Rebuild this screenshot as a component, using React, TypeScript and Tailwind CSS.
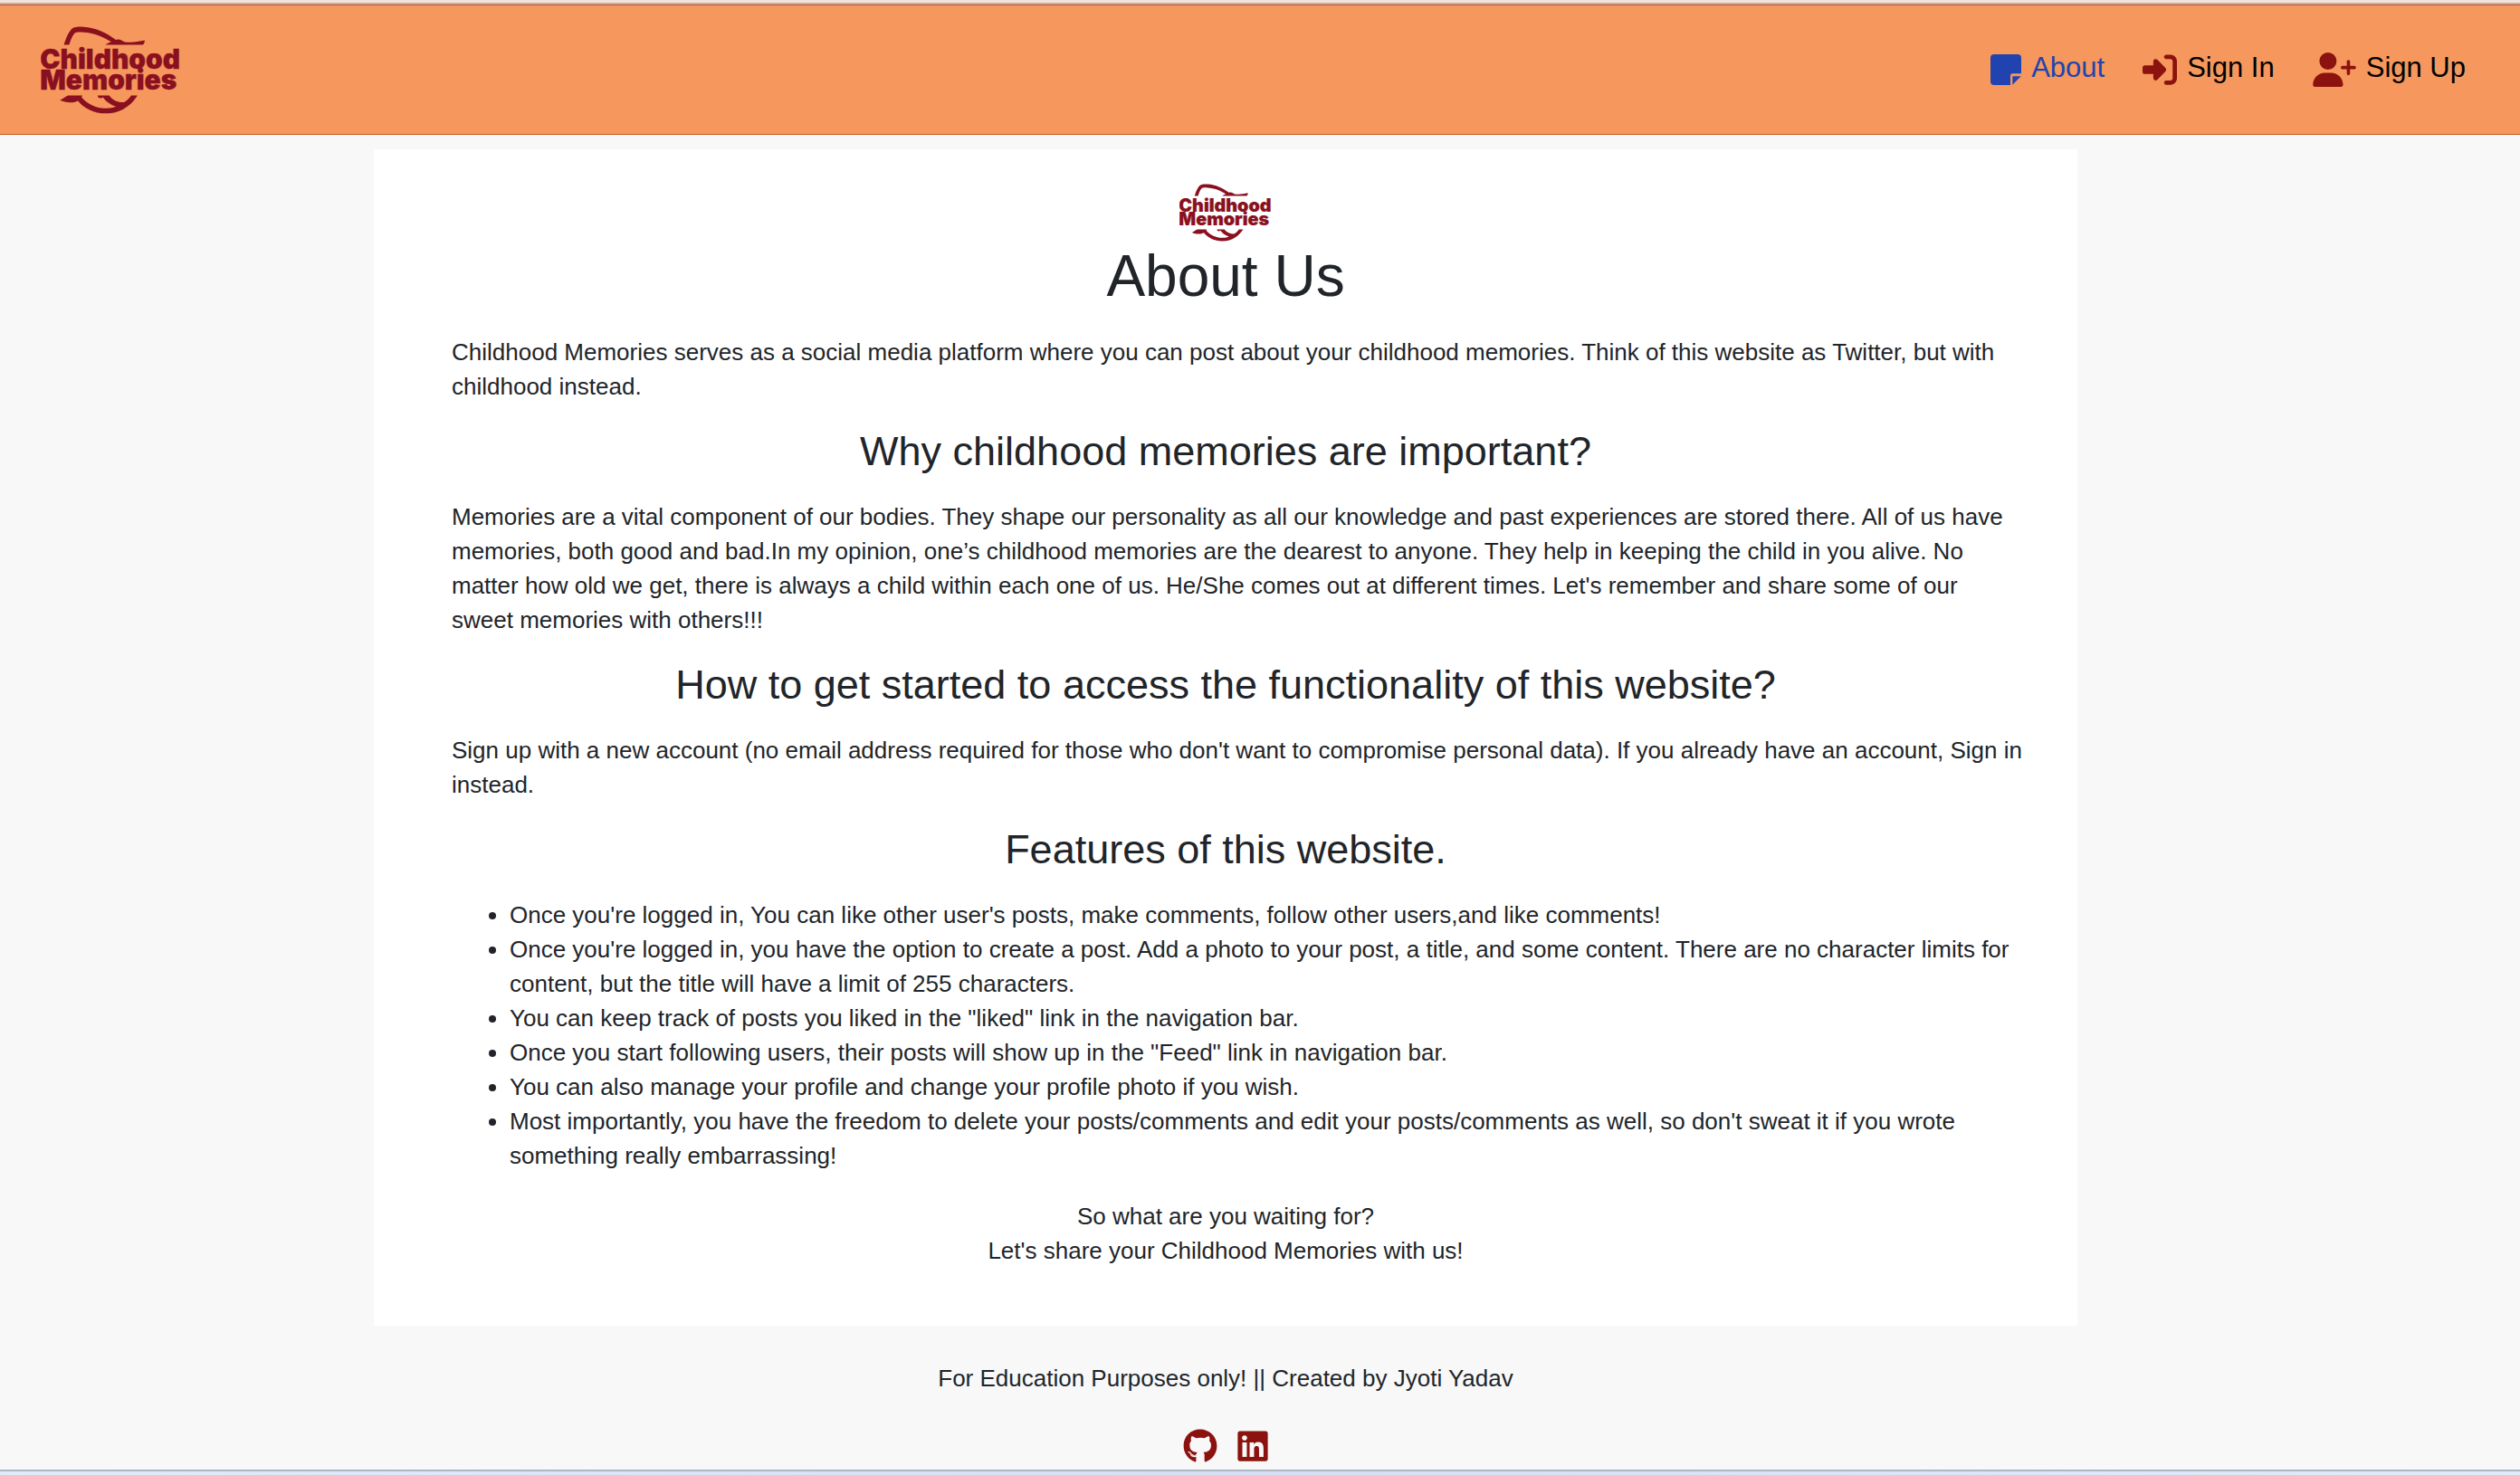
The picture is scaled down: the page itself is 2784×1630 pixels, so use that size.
import React from "react";
import { FaGithub, FaLinkedin } from "react-icons/fa";
import { FaRightToBracket, FaUserPlus } from "react-icons/fa6";

function Logo({ className }: { className: string }) {
  return (
    <svg viewBox="135 85 465 292" className={className} role="img" aria-label="Childhood Memories">
      <g fill="#8a1020">
        <path d="M211 147 C217 128 224 110 234 98 C240 88 256 86 276 87 C318 89 352 106 384 130 C394 126 402 130 410 136 C430 142 456 137 480 132 C480 139 478 144 474 147 L349 147 C356 142 362 138 369 137 C340 119 310 106 276 105 C262 104 252 104 246 109 C238 119 233 132 229 147 Z" />
        <path d="M198 331 C208 326 216 318 226 315 L273 315 L270 321 C290 344 320 358 350 358 C364 358 376 356 385 352 C366 346 350 334 341 321 C336 325 330 325 325 321 L324 315 L362 315 C372 330 388 338 411 338 C421 332 429 324 435 315 L456 315 C438 344 404 375 350 375 C312 375 278 358 258 333 C240 342 216 339 198 331 Z" />
        <text
          fontFamily="Inter, 'Liberation Sans', sans-serif"
          fontWeight={900}
          fontSize="90"
          stroke="#8a1020"
          strokeWidth={1}
          strokeLinejoin="round"
        >
          <tspan x="132" y="228">Childhood</tspan>
          <tspan x="132" y="297">Memories</tspan>
        </text>
      </g>
    </svg>
  );
}

function NoteIcon({ className }: { className: string }) {
  return (
    <svg viewBox="0 0 102 102" fill="currentColor" className={className} aria-hidden="true">
      <path d="M12 0H90A12 12 0 0 1 102 12V64H73A7 7 0 0 0 66 71V102H12A12 12 0 0 1 0 90V12A12 12 0 0 1 12 0Z" />
      <path d="M73 73H101L73 101Z" />
    </svg>
  );
}

const navLinks = [
  { label: "About", Icon: NoteIcon, icon: "h-[34px] w-[34px]", color: "text-[#2143b0]", iconColor: "text-[#2143b0]" },
  { label: "Sign In", Icon: FaRightToBracket, icon: "h-[38px] w-[38px]", color: "text-black", iconColor: "text-[#8b120e]" },
  { label: "Sign Up", Icon: FaUserPlus, icon: "h-[38px] w-12", color: "text-black", iconColor: "text-[#8b120e]" },
];

const features = [
  "Once you're logged in, You can like other user's posts, make comments, follow other users,and like comments!",
  "Once you're logged in, you have the option to create a post. Add a photo to your post, a title, and some content. There are no character limits for content, but the title will have a limit of 255 characters.",
  'You can keep track of posts you liked in the "liked" link in the navigation bar.',
  'Once you start following users, their posts will show up in the "Feed" link in navigation bar.',
  "You can also manage your profile and change your profile photo if you wish.",
  "Most importantly, you have the freedom to delete your posts/comments and edit your posts/comments as well, so don't sweat it if you wrote something really embarrassing!",
];

function Heading({ children }: { children: React.ReactNode }) {
  return <h2 className="text-center text-[45px] leading-[54px]">{children}</h2>;
}

function Paragraph({ children }: { children: React.ReactNode }) {
  return <p className="-mr-[26px]">{children}</p>;
}

export default function App() {
  return (
    <div className="flex min-h-screen flex-col bg-[#f8f8f8] font-['Liberation_Sans',Arial,sans-serif] text-[26px] leading-[38px] text-[#212529]">
      <div className="h-[5px] border-b-2 border-[#bfb0a9] bg-[#f6e0da]" />
      <header className="flex h-36 items-center justify-between border-y border-[#c4571c] bg-[#f6975d] pr-[60px] pl-[45px]">
        <a href="#home">
          <Logo className="h-[97px] w-[155px]" />
        </a>
        <nav className="flex items-center gap-[42px]">
          {navLinks.map(({ label, Icon, icon, color, iconColor }) => (
            <a key={label} href="#nav" className={`flex items-center gap-[11px] text-[31px] ${color}`}>
              <Icon className={`${icon} ${iconColor}`} />
              <span className="pb-1">{label}</span>
            </a>
          ))}
        </nav>
      </header>

      <div className="flex flex-col items-center pt-4 pr-[76px]">
        <main className="flex w-full max-w-[1882px] flex-col gap-[26px] bg-white px-[86px] pt-[38px] pb-16">
          <div className="flex flex-col items-center">
            <Logo className="h-[64px] w-[102px]" />
            <h1 className="text-[64px] leading-[77px]">About Us</h1>
          </div>
          <Paragraph>
            Childhood Memories serves as a social media platform where you can post about your childhood
            memories. Think of this website as Twitter, but with childhood instead.
          </Paragraph>
          <Heading>Why childhood memories are important?</Heading>
          <Paragraph>
            Memories are a vital component of our bodies. They shape our personality as all our knowledge
            and past experiences are stored there. All of us have memories, both good and bad.In my
            opinion, one’s childhood memories are the dearest to anyone. They help in keeping the child in
            you alive. No matter how old we get, there is always a child within each one of us. He/She
            comes out at different times. Let's remember and share some of our sweet memories with
            others!!!
          </Paragraph>
          <Heading>How to get started to access the functionality of this website?</Heading>
          <Paragraph>
            Sign up with a new account (no email address required for those who don't want to compromise
            personal data). If you already have an account, Sign in instead.
          </Paragraph>
          <Heading>Features of this website.</Heading>
          <ul className="-mr-[26px] mb-[3px] list-disc pl-16">
            {features.map((feature) => (
              <li key={feature}>{feature}</li>
            ))}
          </ul>
          <p className="text-center">
            So what are you waiting for?
            <br />
            Let's share your Childhood Memories with us!
          </p>
        </main>

        <footer className="flex flex-col items-center gap-[37px] pt-[39px]">
          <p>For Education Purposes only! || Created by Jyoti Yadav</p>
          <div className="flex gap-[22px] text-[#8b120e]">
            <a href="#github" aria-label="GitHub">
              <FaGithub className="h-[38px] w-[38px]" />
            </a>
            <a href="#linkedin" aria-label="LinkedIn">
              <FaLinkedin className="h-[38px] w-[34px]" />
            </a>
          </div>
        </footer>
      </div>
      <div className="mt-auto h-[6px] border-t-2 border-[#adb6c2] bg-linear-to-r from-[#dfebf8] via-[#d5dff5] to-[#dfebf8]" />
    </div>
  );
}
